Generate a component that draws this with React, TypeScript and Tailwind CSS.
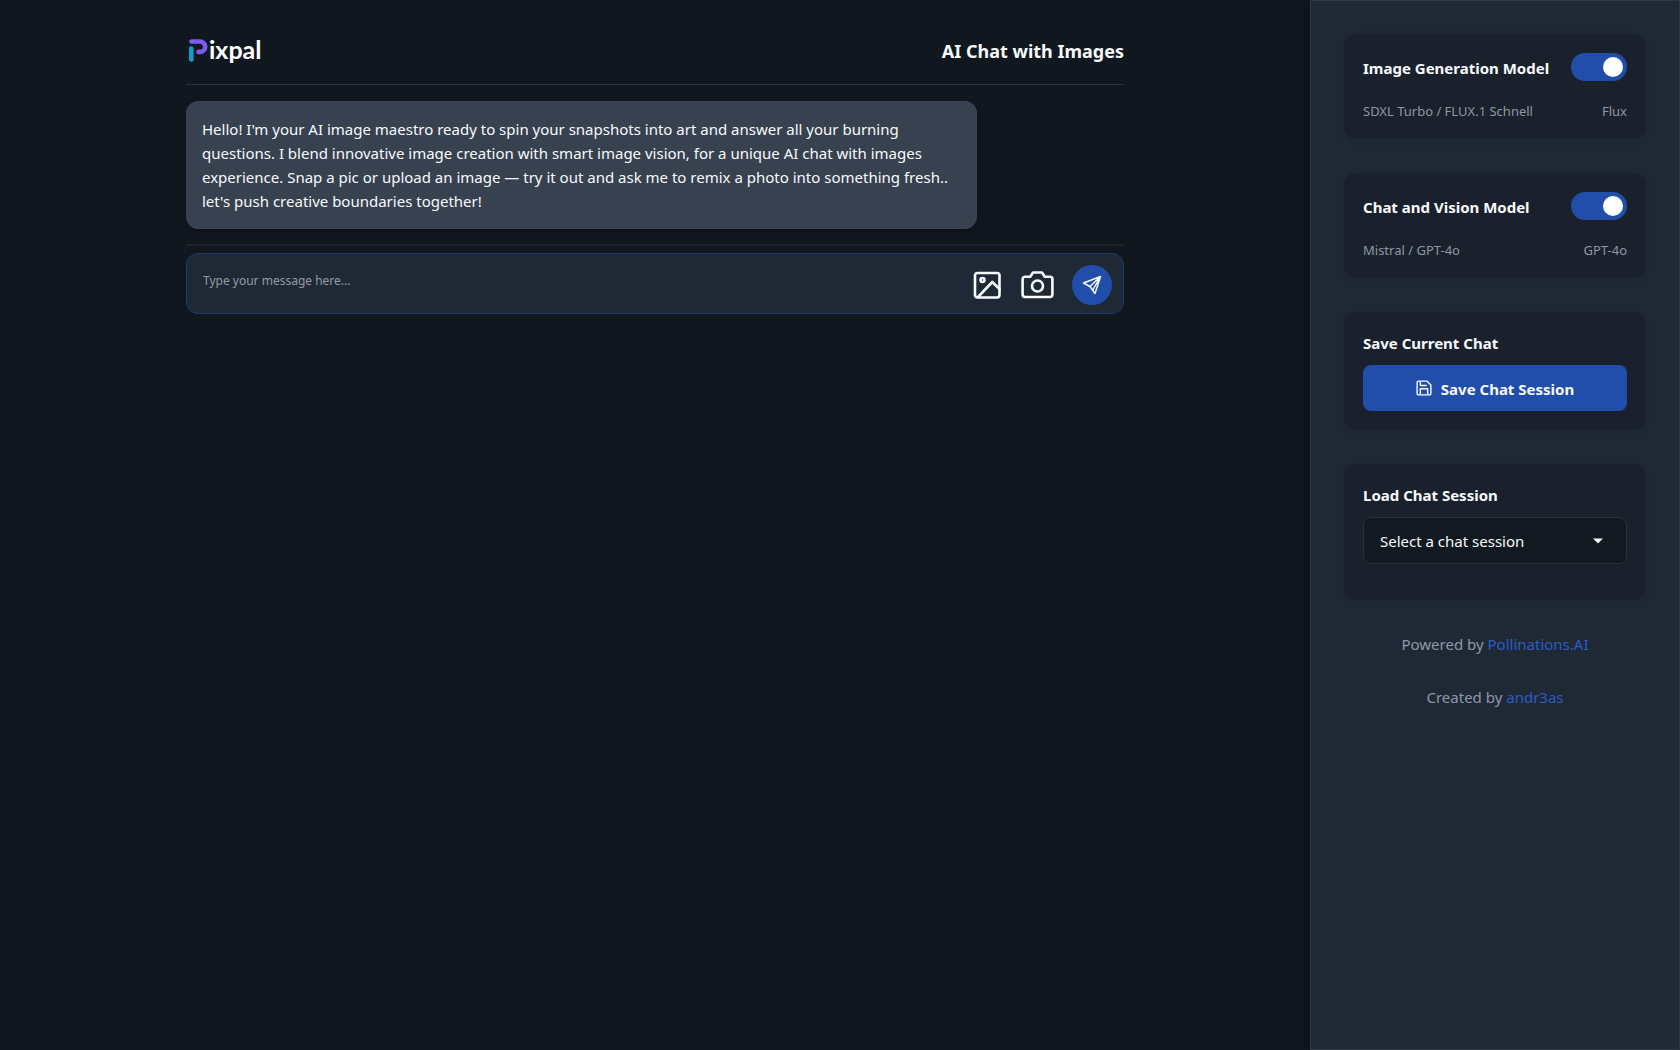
import { useState, type ReactNode } from "react";

const INTRO =
  "Hello! I'm your AI image maestro ready to spin your snapshots into art and answer all your burning questions. I blend innovative image creation with smart image vision, for a unique AI chat with images experience. Snap a pic or upload an image — try it out and ask me to remix a photo into something fresh.. let's push creative boundaries together!";

function Logo() {
  return (
    <a href="#" aria-label="Pixpal" className="flex items-start">
      <svg width="23" height="28" viewBox="0 0 23 28" fill="none" strokeLinecap="round" strokeWidth="4.6">
        <path d="M5.500 5.500H14A5.200 5.200 0 0 1 14 15.900H12.500" stroke="#7c5cf0" />
        <path d="M5.300 12.500V23.500" stroke="#0b9fd0" />
      </svg>
      <span className="font-['Lato',sans-serif] text-[25px] leading-[26px] font-bold text-white">ixpal</span>
    </a>
  );
}

function Card({ children, className = "" }: { children: ReactNode; className?: string }) {
  return (
    <section className={`rounded-xl bg-[#1a212d] px-[19px] shadow-[0_2px_6px_rgba(0,0,0,0.05)] ${className}`}>
      {children}
    </section>
  );
}

function ModelCard({ id, title, options, value }: { id: string; title: string; options: string; value: string }) {
  const [on, setOn] = useState(true);
  return (
    <Card className="pt-[19px] pb-[17px]">
      <div className="flex items-center justify-between">
        <label htmlFor={id} className="pt-[2px] text-[15px] leading-[26px] font-bold whitespace-nowrap text-[#f7fafc]">
          {title}
        </label>
        <input
          id={id}
          type="checkbox"
          role="switch"
          checked={on}
          onChange={() => setOn(!on)}
          className="h-7 w-14 shrink-0 cursor-pointer appearance-none rounded-full bg-[#4a5568] p-1 before:block before:size-5 before:rounded-full before:bg-white before:content-[''] checked:bg-[#214dab] checked:before:translate-x-7"
        />
      </div>
      <div className="mt-[19px] flex justify-between text-[13px] leading-[22px] text-[#8f97a6]">
        <span>{options}</span>
        <span>{value}</span>
      </div>
    </Card>
  );
}

export default function App() {
  const [message, setMessage] = useState("");
  return (
    <div className="flex min-h-screen bg-[#11171f] font-['Noto_Sans',sans-serif] text-[15px] text-[#f7fafc]">
      <main className="min-w-0 flex-1 px-8">
        <div className="mx-auto max-w-[938px]">
          <header className="flex h-[85px] items-start justify-between border-b border-[#2b313b] pt-9">
            <Logo />
            <h1 className="text-lg leading-[30px] font-bold">AI Chat with Images</h1>
          </header>
          <div className="border-b-2 border-[#20252c] pt-4 pb-[15px]">
            <p className="max-w-[791px] rounded-xl border border-[#3b4553] bg-[#374150] px-[15px] py-[15px] leading-6 shadow-[0_4px_8px_rgba(0,0,0,0.15)]">
              {INTRO}
            </p>
          </div>
          <form
            onSubmit={(e) => e.preventDefault()}
            className="mt-[7px] flex h-[61px] items-center rounded-xl border border-[#20396e] bg-[#1f2936] pt-[2px] pr-[11px] pl-4"
          >
            <textarea
              aria-label="Message"
              rows={1}
              value={message}
              onChange={(e) => setMessage(e.target.value)}
              placeholder="Type your message here..."
              className="mb-2 h-6 min-w-0 flex-1 resize-none bg-transparent text-[12px] leading-6 outline-none placeholder:text-[#929aa7]"
            />
            <button type="button" aria-label="Upload image" className="mt-px mr-4 p-px">
              <svg width="32" height="32" viewBox="0 0 32 32" fill="none" stroke="#f7fafc" strokeWidth="2.6" strokeLinecap="round" strokeLinejoin="round">
                <rect x="3" y="4" width="24.5" height="24.5" rx="2.4" />
                <circle cx="10.500" cy="11" r="2" />
                <path d="M6 28 20.300 13 27.500 20" />
              </svg>
            </button>
            <button type="button" aria-label="Take a photo" className="mt-px mr-[17px]">
              <svg width="34" height="34" viewBox="0 0 34 34" fill="none" stroke="#f7fafc" strokeWidth="2.6" strokeLinecap="round" strokeLinejoin="round">
                <path d="M4 8.7h5.2l2.8-4.2h9l2.8 4.2h5.2a2.4 2.4 0 0 1 2.4 2.4v15.500a2.4 2.4 0 0 1-2.4 2.4h-25a2.4 2.4 0 0 1-2.4-2.4V11.100a2.4 2.4 0 0 1 2.4-2.400z" />
                <circle cx="16.500" cy="18" r="5.500" />
              </svg>
            </button>
            <button type="submit" aria-label="Send" className="mt-px flex size-10 items-center justify-center rounded-full bg-[#214dab]">
              <svg width="20" height="20" viewBox="0 0 20 20" fill="none" stroke="#f7fafc" strokeWidth="1.5" strokeLinecap="round" strokeLinejoin="round">
                <path d="M18.500 1.500 1.500 8 8 11.500 13 18.500zM18.500 1.500 8 11.500M18.500 1.500 10.800 15" />
              </svg>
            </button>
          </form>
        </div>
      </main>
      <aside className="flex w-[370px] shrink-0 flex-col gap-[34px] border border-[#2d3745] bg-[#1f2936] px-[33px] pt-[33px] shadow-[-4px_0_12px_rgba(0,0,0,0.25)]">
        <ModelCard id="image-model" title="Image Generation Model" options="SDXL Turbo / FLUX.1 Schnell" value="Flux" />
        <ModelCard id="chat-model" title="Chat and Vision Model" options="Mistral / GPT-4o" value="GPT-4o" />
        <Card className="pt-[19px] pb-[19px]">
          <h2 className="leading-6 font-bold">Save Current Chat</h2>
          <button type="button" className="mt-[10px] flex h-[46px] w-full items-center justify-center gap-[9px] rounded-lg bg-[#214dab] font-bold">
            <svg width="16" height="16" viewBox="0 0 17 17" fill="none" stroke="#f7fafc" strokeWidth="1.500" strokeLinejoin="round">
              <path d="M2.500 1.200h9.300l4 4v9.300a1.300 1.300 0 0 1-1.300 1.300h-12a1.300 1.300 0 0 1-1.300-1.300v-12a1.300 1.300 0 0 1 1.300-1.300z" />
              <path d="M4.600 1.200v4.600h6.800M4.600 15.800V9.300h7.800v6.500" />
            </svg>
            <span className="pt-[2px]">Save Chat Session</span>
          </button>
        </Card>
        <Card className="pt-[19px] pb-9">
          <label htmlFor="session" className="block leading-6 font-bold">
            Load Chat Session
          </label>
          <div className="relative mt-[10px]">
            <select
              id="session"
              className="h-[47px] w-full appearance-none rounded-lg border border-[#28303c] bg-[#131921] pt-[2px] pr-10 pl-4 text-[15px] text-[#f7fafc]"
            >
              <option>Select a chat session</option>
            </select>
            <svg className="pointer-events-none absolute top-[21px] right-6" width="10" height="6" viewBox="0 0 10 6">
              <path d="M0 0.500h10L5 5.500z" fill="#f7fafc" />
            </svg>
          </div>
        </Card>
        <footer className="-mt-[2px] flex flex-col gap-[29px] text-center leading-6 text-[#8f97a6]">
          <p>
            Powered by <a href="#" className="text-[#2c5bc4]">Pollinations.AI</a>
          </p>
          <p>
            Created by <a href="#" className="text-[#2c5bc4]">andr3as</a>
          </p>
        </footer>
      </aside>
    </div>
  );
}
